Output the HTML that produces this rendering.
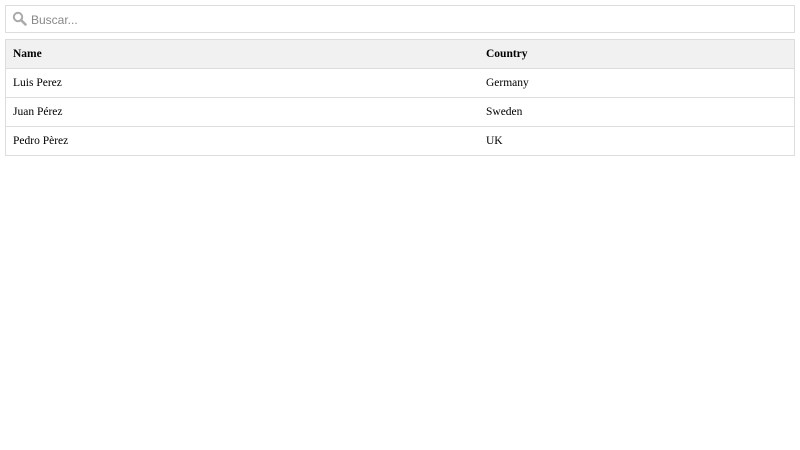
<!DOCTYPE html>
<html><head><meta charset="utf-8"><style>
body{margin:0;background:#fff;width:800px;height:450px;overflow:hidden}
.search{position:absolute;left:5px;top:5px;width:788px;height:26px;border:1px solid #ddd;background:#fff}
.search svg{position:absolute;left:6px;top:5px}
.search span{position:absolute;left:25px;top:7px;font:12px "Liberation Sans",sans-serif;color:#888}
table{position:absolute;left:5px;top:39px;width:790px;border-collapse:collapse;font:11.5px "Liberation Serif",serif;color:#000}
td,th{border:1px solid #ddd;height:28px;padding:0 0 0 7px;text-align:left}
th{background:#f1f1f1;font-weight:bold}
td:first-child,th:first-child{width:466px;border-right:none}
td:last-child,th:last-child{border-left:none}
</style></head><body>
<div class="search"><svg width="16" height="16" viewBox="0 0 16 16"><circle cx="6" cy="6" r="4.2" fill="none" stroke="#aaa" stroke-width="2"/><line x1="9" y1="9" x2="13.5" y2="13.5" stroke="#aaa" stroke-width="2.6" stroke-linecap="round"/></svg><span>Buscar...</span></div>
<table>
<tr><th>Name</th><th>Country</th></tr>
<tr><td>Luis Perez</td><td>Germany</td></tr>
<tr><td>Juan Pérez</td><td>Sweden</td></tr>
<tr><td>Pedro Pèrez</td><td>UK</td></tr>
</table>
</body></html>
